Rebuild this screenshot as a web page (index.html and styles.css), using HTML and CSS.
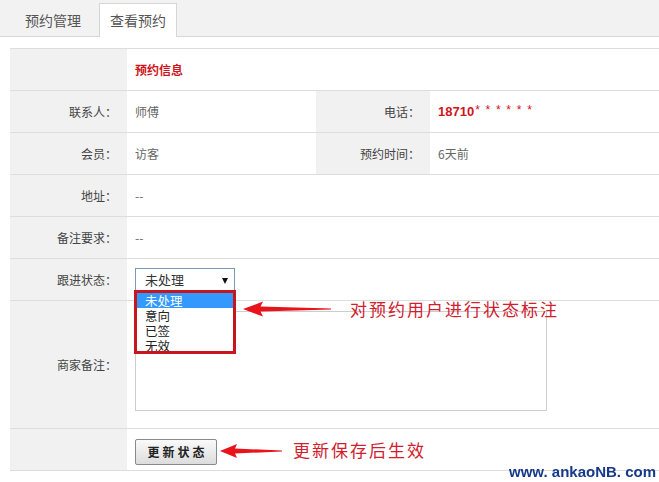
FILE: index.html
```html
<!DOCTYPE html>
<html lang="zh-CN">
<head>
    <meta charset="UTF-8">
    <title>查看预约</title>
    <link rel="stylesheet" href="styles.css">
</head>
<body>
    <div class="tabs">
        <span class="tab">预约管理</span>
        <span class="tab active">查看预约</span>
    </div>

    <div class="info">
        <div class="row">
            <div class="label"></div>
            <div class="value title">预约信息</div>
        </div>
        <div class="row">
            <div class="label">联系人：</div>
            <div class="value half">师傅</div>
            <div class="label narrow">电话：</div>
            <div class="value phone"><b>18710</b><span class="stars">* * * * * *</span></div>
        </div>
        <div class="row">
            <div class="label">会员：</div>
            <div class="value half">访客</div>
            <div class="label narrow">预约时间：</div>
            <div class="value">6天前</div>
        </div>
        <div class="row">
            <div class="label">地址：</div>
            <div class="value">--</div>
        </div>
        <div class="row">
            <div class="label">备注要求：</div>
            <div class="value">--</div>
        </div>
        <div class="row">
            <div class="label">跟进状态：</div>
            <div class="value">
                <div class="select">
                    未处理<span class="caret"></span>
                    <ul class="options">
                        <li class="on">未处理</li>
                        <li>意向</li>
                        <li>已签</li>
                        <li>无效</li>
                    </ul>
                    <div class="note note-status">
                        <svg class="arrow" width="88" height="16" viewBox="0 0 88 16">
                            <path d="M0 8 L20 0.5 L17.5 5.5 L88 7.5 L88 8.5 L17.5 10.5 L20 15.5 Z" fill="#e8131b"/>
                        </svg>
                        <span class="note-text">对预约用户进行状态标注</span>
                    </div>
                </div>
            </div>
        </div>
        <div class="row tall">
            <div class="label">商家备注：</div>
            <div class="value top">
                <textarea class="remark"></textarea>
            </div>
        </div>
        <div class="row">
            <div class="label"></div>
            <div class="value">
                <button class="btn">更新状态</button>
                <svg class="arrow arrow-save" width="62" height="14" viewBox="0 0 62 14">
                    <path d="M0 7 L17 0 L15 4.5 L62 6.5 L62 7.5 L15 9.5 L17 14 Z" fill="#e8131b"/>
                </svg>
                <span class="note-text">更新保存后生效</span>
            </div>
        </div>
    </div>

    <div class="watermark">www. ankaoNB. com</div>
</body>
</html>
```

FILE: styles.css
```css
* {
    box-sizing: border-box;
}
body {
    margin: 0;
    font-family: "Noto Sans CJK SC", sans-serif;
    font-size: 12px;
    color: #555;
    background: #fff;
}
.tabs {
    display: flex;
    align-items: flex-end;
    height: 37px;
    padding-left: 14px;
    background: #f2f2f2;
    border-bottom: 1px solid #d6d6d6;
}
.tab {
    height: 34px;
    line-height: 32px;
    padding: 0 10px;
    margin-right: 7px;
    margin-bottom: -1px;
    font-size: 14px;
    color: #555;
    border: 1px solid transparent;
    border-bottom: none;
}
.tab.active {
    background: #fff;
    border-color: #d6d6d6;
}
.info {
    margin: 11px 0 0 10px;
    border-top: 1px solid #ddd;
}
.row {
    display: flex;
    height: 42px;
    border-bottom: 1px solid #ddd;
}
.row.tall {
    height: 128px;
}
.label {
    flex: none;
    width: 117px;
    padding-right: 10px;
    background: #f1f1f1;
    display: flex;
    align-items: center;
    justify-content: flex-end;
    color: #444;
}
.label.narrow {
    width: 114px;
}
.value {
    flex: 1;
    min-width: 0;
    display: flex;
    align-items: center;
    padding-left: 8px;
    color: #666;
}
.value.half {
    flex: none;
    width: 189px;
}
.value.top {
    align-items: flex-start;
}
.title {
    color: #d0141c;
    font-weight: bold;
}
.phone {
    color: #d0141c;
}
.phone b {
    font: bold 13px "Liberation Sans", Arial, sans-serif;
}
.stars {
    font: 12px "Liberation Sans", Arial, sans-serif;
    letter-spacing: 1.2px;
    margin-left: 1px;
    position: relative;
    top: -2px;
}
.select {
    position: relative;
    width: 100px;
    height: 24px;
    padding-left: 9px;
    line-height: 22px;
    font-size: 13px;
    color: #333;
    border: 1px solid #7b98b8;
    background: #fff;
}
.caret {
    position: absolute;
    right: 6px;
    top: 9px;
    border-left: 3.5px solid transparent;
    border-right: 3.5px solid transparent;
    border-top: 6px solid #111;
}
.options {
    position: absolute;
    left: -2px;
    top: 21px;
    width: 102px;
    height: 64px;
    margin: 0;
    padding: 0;
    list-style: none;
    overflow: hidden;
    background: #fff;
    border: 3px solid #c8161e;
}
.options li {
    height: 15px;
    line-height: 15px;
    padding-left: 8px;
    font-size: 12.5px;
    color: #222;
}
.options li.on {
    background: #3399ff;
    color: #fff;
}
.note {
    position: absolute;
    left: 107px;
    top: 29px;
    display: flex;
    align-items: center;
    white-space: nowrap;
}
.arrow {
    display: block;
    flex: none;
}
.note-text {
    font-size: 17px;
    letter-spacing: 2px;
    color: #d0202e;
    white-space: nowrap;
}
.note-status .note-text {
    margin-left: 19px;
}
.arrow-save {
    margin: 2px 11px 0 3px;
}
.remark {
    display: block;
    width: 412px;
    height: 100px;
    margin-top: 10px;
    border: 1px solid #ccc;
    resize: none;
}
.btn {
    width: 82px;
    height: 26px;
    margin-top: 4px;
    padding: 0;
    font-family: "Noto Sans CJK SC", sans-serif;
    font-size: 12px;
    font-weight: bold;
    letter-spacing: 3px;
    text-indent: 3px;
    color: #222;
    border: 1px solid #8a8a8a;
    border-radius: 2px;
    background: linear-gradient(#fafafa, #dcdcdc);
}
.watermark {
    position: fixed;
    right: 3px;
    bottom: 2px;
    z-index: 5;
    font: bold 15px "Liberation Sans", Arial, sans-serif;
    line-height: 16px;
    color: #16398a;
}
```
